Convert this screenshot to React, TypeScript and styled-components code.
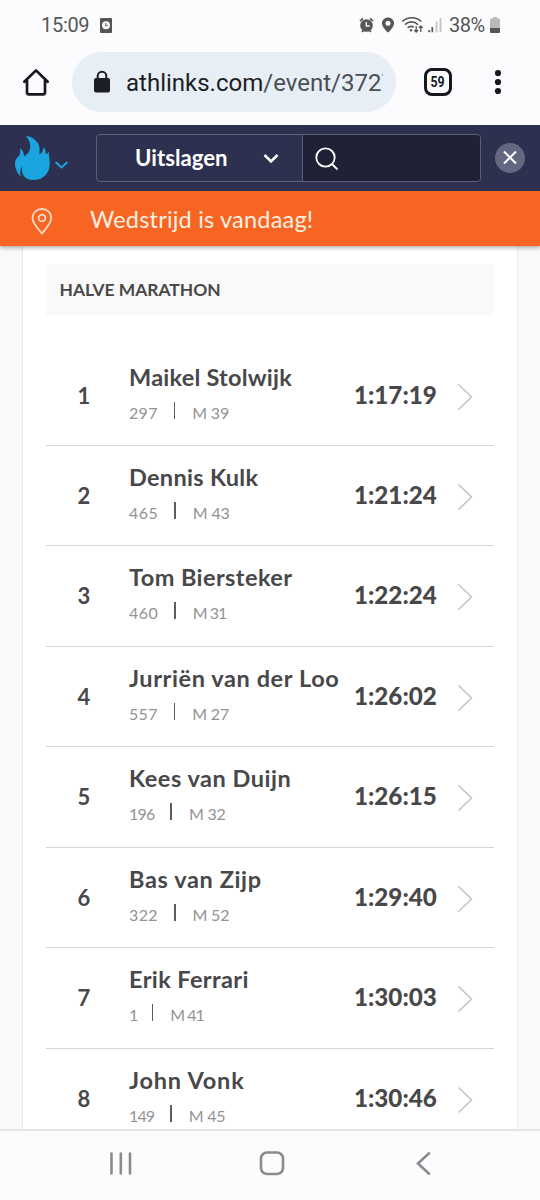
import React from "react";
import styled, { createGlobalStyle } from "styled-components";

const GlobalStyle = createGlobalStyle`
  * { box-sizing: border-box; }
  body { margin: 0; background: #fcfcff; font-family: Lato, "Open Sans", sans-serif; }
  svg { display: block; flex: none; }
`;

const Screen = styled.div`
  width: 540px;
  height: 1200px;
  display: flex;
  flex-direction: column;
  overflow: hidden;
  background: #fcfcff;
`;

const StatusBar = styled.div`
  height: 50px;
  flex: none;
  display: flex;
  align-items: center;
  padding: 0 40px 0 41px;
  font: 400 20px/24px Roboto, sans-serif;
  color: #565656;
`;

const Clock = styled.span`
  width: 58px;
  letter-spacing: -0.3px;
`;

const StatusIcons = styled.div`
  margin-left: auto;
  display: flex;
  align-items: center;
`;

const Percent = styled.span`
  margin-left: 6px;
  width: 41px;
  letter-spacing: -0.5px;
`;

const BrowserBar = styled.div`
  height: 75px;
  flex: none;
  display: flex;
  align-items: flex-start;
  padding: 2px 0 0 20px;
`;

const ToolIcon = styled.div<{ $left?: number }>`
  height: 60px;
  display: flex;
  align-items: center;
  margin-left: ${(p) => p.$left ?? 0}px;
`;

const AddressBar = styled.div`
  width: 324px;
  height: 60px;
  margin-left: 20px;
  padding: 0 13px 0 20px;
  border-radius: 30px;
  background: #e8eef5;
  display: flex;
  align-items: center;
`;

const Url = styled.div`
  width: 258px;
  margin: 2px 0 0 14px;
  overflow: hidden;
  white-space: nowrap;
  font: 400 24px/34px Roboto, sans-serif;
  color: #4a4f55;
  b { font-weight: 400; color: #1b1f24; }
`;

const TabCount = styled.div`
  width: 28px;
  height: 28px;
  border: 3px solid #16181c;
  border-radius: 8px;
  display: flex;
  align-items: center;
  justify-content: center;
  font: 700 15px/1 Roboto, sans-serif;
  color: #16181c;
  span { transform: scaleX(0.82); }
`;

const SiteHeader = styled.header`
  height: 66px;
  flex: none;
  display: flex;
  align-items: center;
  padding-left: 14px;
  background: #2d304e;
`;

const SearchGroup = styled.div`
  width: 385px;
  height: 48px;
  margin-left: 27px;
  display: flex;
  border: 1.5px solid #5e6078;
  border-radius: 4px;
  overflow: hidden;
`;

const Category = styled.div`
  width: 206px;
  display: flex;
  align-items: center;
  padding: 0 23px 1px 38px;
  justify-content: space-between;
  border-right: 1.5px solid #5e6078;
  color: #fff;
  font-size: 22.2px;
  font-weight: 700;
`;

const SearchField = styled.div`
  flex: 1;
  display: flex;
  align-items: center;
  padding: 2px 0 0 12px;
  background: #202136;
`;

const CloseButton = styled.div`
  width: 30px;
  height: 30px;
  margin-left: 14px;
  border-radius: 50%;
  background: #646780;
  display: flex;
  align-items: center;
  justify-content: center;
`;

const Notice = styled.div`
  height: 55px;
  flex: none;
  position: relative;
  display: flex;
  align-items: center;
  padding-left: 31px;
  background: #f76523;
  box-shadow: 0 2px 4px rgba(0, 0, 0, 0.3);
  color: #fff0e4;
  font-size: 23.5px;
  letter-spacing: 0.2px;
  svg { margin-top: 4px; }
`;

const NoticeText = styled.span`
  margin: 0 0 0 38px;
  height: 32px;
  line-height: 32px;
`;

const Page = styled.main`
  flex: 1;
  min-height: 0;
  padding: 0 22px 0 21.5px;
  overflow: hidden;
  background: #f9f9f9;
`;

const Card = styled.section`
  height: 100%;
  padding: 18px 23px 0;
  background: #fff;
  border: solid #ebebeb;
  border-width: 0 1px;
`;

const Division = styled.h2`
  height: 51px;
  margin: 0 0 30.6px;
  padding-left: 14px;
  background: #f9f9f9;
  color: #48484a;
  font-size: 17.4px;
  font-weight: 700;
  line-height: 52px;
`;

const Row = styled.div`
  height: 100.45px;
  display: flex;
  border-bottom: 1px solid #d6d6d6;
  color: #48484a;
`;

const Rank = styled.div`
  width: 77px;
  padding-top: 1px;
  line-height: 98px;
  text-align: center;
  font-size: 22px;
  font-weight: 700;
`;

const Runner = styled.div`
  flex: 1;
  padding: 16px 0 0 6.5px;
`;

const Name = styled.div<{ $track: number }>`
  height: 31px;
  line-height: 30px;
  white-space: nowrap;
  font-size: 23.5px;
  font-weight: 700;
  letter-spacing: ${(p) => p.$track}px;
`;

const Details = styled.div`
  display: flex;
  height: 30px;
  line-height: 40px;
  font-size: 16px;
  color: #939393;
`;

const Tracked = styled.span<{ $track: number }>`
  letter-spacing: ${(p) => p.$track}px;
`;

const Divider = styled.i`
  width: 1.5px;
  height: 17px;
  margin: 9px 17px 0 16px;
  background: #5c5c5c;
`;

const Time = styled.div`
  width: 82px;
  line-height: 98px;
  font-size: 24.2px;
  font-weight: 900;
  white-space: nowrap;
`;

const Arrow = styled.div`
  width: 58px;
  padding: 37px 0 0 21px;
`;

const SystemNav = styled.nav`
  height: 71px;
  flex: none;
  display: flex;
  padding: 20px 0 0 108px;
  border-top: 2px solid #e6e6e8;
  background: #fcfcff;
`;

const results = [
  { name: "Maikel Stolwijk", track: 0.23, bib: "297", bibTrack: 0.3, group: "M 39", groupTrack: -0.2, time: "1:17:19" },
  { name: "Dennis Kulk", track: 0.3, bib: "465", bibTrack: 0.5, group: "M 43", groupTrack: -0.2, time: "1:21:24" },
  { name: "Tom Biersteker", track: 0.43, bib: "460", bibTrack: 0.5, group: "M 31", groupTrack: -1, time: "1:22:24" },
  { name: "Jurriën van der Loo", track: 0.6, bib: "557", bibTrack: 0.3, group: "M 27", groupTrack: -0.2, time: "1:26:02" },
  { name: "Kees van Duijn", track: 0.52, bib: "196", bibTrack: -0.8, group: "M 32", groupTrack: -0.2, time: "1:26:15" },
  { name: "Bas van Zijp", track: 0.62, bib: "322", bibTrack: 0.4, group: "M 52", groupTrack: -0.2, time: "1:29:40" },
  { name: "Erik Ferrari", track: 0.4, bib: "1", bibTrack: -2.5, group: "M 41", groupTrack: -1, time: "1:30:03" },
  { name: "John Vonk", track: 0.8, bib: "149", bibTrack: -0.9, group: "M 45", groupTrack: -0.2, time: "1:30:46" },
];

const SystemIcons = () => (
  <svg width="76" height="20" viewBox="0 0 76 20" fill="none" stroke="#565656">
    <circle cx="7.5" cy="10.5" r="6.3" fill="#565656" stroke="none" />
    <path d="M1 6.2 4 3.4M14 6.2 11 3.4M3 17l1.8-1.8M12 17l-1.8-1.8" strokeWidth="1.7" />
    <path d="M7.3 7v4h3.4" stroke="#fcfcff" strokeWidth="1.4" />
    <path d="M29 2.5c-3.4 0-6 2.5-6 5.7 0 4 6 9.3 6 9.3s6-5.3 6-9.3c0-3.2-2.6-5.7-6-5.7Z" fill="#565656" stroke="none" />
    <circle cx="29" cy="8.200" r="2.500" fill="#fcfcff" stroke="none" />
    <path d="M43.300 6.500c5-5 14-5 19 0M46 9.600c3.800-3.600 9.300-3.600 13 0M48.700 12.800c2-1.700 4.200-1.700 6-.6" strokeWidth="1.600" />
    <circle cx="52" cy="15.300" r="1.200" fill="#565656" stroke="none" />
    <path d="M57.200 11v6M55.300 15l1.900 2 1.900-2M61.800 17v-6M59.900 13l1.900-2 1.900 2" strokeWidth="1.300" />
    <path d="M70.200 17.300v-2.300M73.300 17.300v-5.300" strokeWidth="1.700" />
  </svg>
);

const Flame = () => (
  <path
    d="M12 1C18 1.500 24 6 25.300 11.500c.8 3-.3 5.500.4 8 2-1.500 3.600-4 4.100-7.500 2.200 2.500 1.500 5 2 7 1.300-.1 2.500-1 3.200-2.300-.6 3.300.9 7.300.7 12.300C35.400 37 31 45 18.500 45c-2.800 0-5.300-.9-7.500-2.700-3.200-3.200-3.500-7-2.700-11.300-2.300 3-2.500 6.800-1.300 10.500C3.500 38.500 1 33.500 1 28.500c0-6 4.500-6.500 5.200-10.500.3-1.600-.2-3-.2-4.500 2.600 1.300 4 4 4 8 4.500-2.700 6.300-6 6.200-10.500C16.100 7 14.500 3.800 12 1Z"
    fill="#1ba5e0"
  />
);

export default function App() {
  return (
    <Screen>
      <GlobalStyle />
      <StatusBar>
        <Clock>15:09</Clock>
        <svg width="14" height="15" viewBox="0 0 14 15">
          <rect x="1" width="12" height="15" rx="1" fill="#565656" />
          <circle cx="7" cy="7.3" r="4" fill="#fcfcff" />
          <path d="M6.7 5v2.600h2" fill="none" stroke="#565656" />
        </svg>
        <StatusIcons>
          <SystemIcons />
          <svg width="8" height="20" viewBox="0 0 8 20" stroke="#c4c4c4" strokeWidth="1.800">
            <path d="M1.500 17.300V6.500M5.500 17.300V3" />
          </svg>
          <Percent>38%</Percent>
          <svg width="10" height="16" viewBox="0 0 10 16">
            <path d="M3 0h4v1.500h2q1 0 1 1V11H0V2.500q0-1 1-1h2Z" fill="#b9b9b9" />
            <path d="M0 11h10v4q0 1-1 1H1q-1 0-1-1Z" fill="#565656" />
          </svg>
        </StatusIcons>
      </StatusBar>

      <BrowserBar>
        <ToolIcon>
          <svg width="32" height="32" viewBox="0 0 32 32" fill="none" stroke="#16181c" strokeWidth="2.700" strokeLinejoin="round" strokeLinecap="round">
            <path d="M4.300 15.800 16 4.400l11.700 11.400M7 14v12.500q0 1.800 1.800 1.800h14.400q1.800 0 1.800-1.800V14" />
          </svg>
        </ToolIcon>
        <AddressBar>
          <svg width="20" height="24" viewBox="0 0 20 24">
            <rect x="2" y="8" width="16" height="14.500" rx="2" fill="#1b1f24" />
            <path d="M5.700 9V6a4.300 4.300 0 0 1 8.600 0v3" fill="none" stroke="#1b1f24" strokeWidth="2" />
          </svg>
          <Url><b>athlinks.com</b>/event/3727</Url>
        </AddressBar>
        <ToolIcon $left={28}><TabCount><span>59</span></TabCount></ToolIcon>
        <ToolIcon $left={42}>
          <svg width="8" height="26" viewBox="0 0 8 26" fill="#16181c">
            <circle cx="4" cy="4" r="3.100" /><circle cx="4" cy="13" r="3.100" /><circle cx="4" cy="22" r="3.100" />
          </svg>
        </ToolIcon>
      </BrowserBar>

      <SiteHeader>
        <svg width="55" height="46" viewBox="0 0 55 46">
          <Flame />
          <path d="m41.500 27 6 5.500 6-5.500" fill="none" stroke="#1ba5e0" strokeWidth="2" />
        </svg>
        <SearchGroup>
          <Category>
            Uitslagen
            <svg width="16" height="12" viewBox="0 0 16 12" fill="none" stroke="#fff" strokeWidth="2.500"><path d="m1.500 3 6.500 6.500L14.500 3" /></svg>
          </Category>
          <SearchField>
            <svg width="24" height="24" viewBox="0 0 24 24" fill="none" stroke="#fff" strokeWidth="1.800"><circle cx="10.500" cy="10.500" r="9.200" /><path d="m17 17 5.500 5.500" /></svg>
          </SearchField>
        </SearchGroup>
        <CloseButton>
          <svg width="14" height="14" viewBox="0 0 14 14" stroke="#fff" strokeWidth="2"><path d="m1 0.500 12 12M13 .500l-12 12" /></svg>
        </CloseButton>
      </SiteHeader>

      <Notice>
        <svg width="21" height="28" viewBox="0 0 21 28" fill="none" stroke="#ffd8c4" strokeWidth="1.800">
          <path d="M11 2C5.500 2 1.500 6 1.500 11.200c0 5 4.500 9.300 9.500 15.300 5-6 9.200-10.300 9.200-15.300C20.200 6 16.500 2 11 2Z" /><circle cx="11" cy="11" r="3.400" />
        </svg>
        <NoticeText>Wedstrijd is vandaag!</NoticeText>
      </Notice>

      <Page>
        <Card>
          <Division>HALVE MARATHON</Division>
          {results.map((r, i) => (
            <Row key={r.name}>
              <Rank>{i + 1}</Rank>
              <Runner>
                <Name $track={r.track}>{r.name}</Name>
                <Details>
                  <Tracked $track={r.bibTrack}>{r.bib}</Tracked>
                  <Divider />
                  <Tracked $track={r.groupTrack}>{r.group}</Tracked>
                </Details>
              </Runner>
              <Time>{r.time}</Time>
              <Arrow>
                <svg width="16" height="28" viewBox="0 0 16 28" fill="none" stroke="#c4c4c4" strokeWidth="1.600"><path d="m1.500 1.500 13 12.500-13 12.500" /></svg>
              </Arrow>
            </Row>
          ))}
        </Card>
      </Page>

      <SystemNav>
        <svg width="330" height="26" viewBox="108 0 330 26" fill="none" stroke="#8b8b8e" strokeWidth="2.600" strokeLinecap="round">
          <path d="M111.500 2.500v20M120.800 2.500v20M130 2.500v20M429 2.300 418 12.500l11 10.200" />
          <rect x="261" y="1.500" width="22" height="21.500" rx="6" />
        </svg>
      </SystemNav>
    </Screen>
  );
}
